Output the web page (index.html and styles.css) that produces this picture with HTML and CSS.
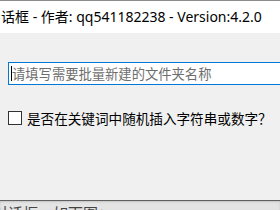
FILE: index.html
```html
<!DOCTYPE html>
<html lang="zh-CN">
<head>
    <meta charset="UTF-8">
    <title>批量新建文件夹</title>
    <link rel="stylesheet" href="styles.css">
</head>
<body>
    <div class="window">
        <div class="titlebar">话框 - 作者: qq541182238 - Version:4.2.0</div>
        <div class="content">
            <div class="field"><span class="caret"></span>请填写需要批量新建的文件夹名称</div>
            <label class="check-row">
                <span class="check-box"></span>
                是否在关键词中随机插入字符串或数字？
            </label>
        </div>
    </div>
    <div class="below">对话框，如下图：</div>
</body>
</html>
```

FILE: styles.css
```css
body {
    margin: 0;
    width: 280px;
    height: 210px;
    overflow: hidden;
    background: #e4e4e4;
    font-family: "Noto Sans", "Noto Sans CJK SC", sans-serif;
    color: #000;
}
.window {
    height: 200px;
    background: #f0f0f0;
}
.titlebar {
    height: 32px;
    border-top: 1px solid #8c8c8c;
    background: #fff;
    font-size: 14px;
    line-height: 32px;
    padding-left: 1px;
    white-space: nowrap;
}
.content {
    padding: 29px 0 0 8px;
}
.field {
    height: 21px;
    border: 1px solid #0078d7;
    border-right: none;
    background: #fff;
    font-size: 13.3px;
    color: #6d6d6d;
    display: flex;
    align-items: center;
    padding-left: 2px;
    white-space: nowrap;
}
.caret {
    width: 1px;
    height: 15px;
    background: #000;
}
.check-row {
    display: flex;
    align-items: center;
    gap: 5px;
    margin-top: 23px;
    font-size: 13.6px;
    white-space: nowrap;
}
.check-box {
    width: 12px;
    height: 12px;
    border: 1px solid #333;
    background: #fff;
}
.below {
    border-top: 1px solid #606060;
    box-shadow: inset 0 1px 2px #c4c4c4;
    height: 9px;
    overflow: hidden;
    font-size: 15px;
    line-height: 24px;
    color: #444;
    text-indent: -7px;
    white-space: nowrap;
}
```
